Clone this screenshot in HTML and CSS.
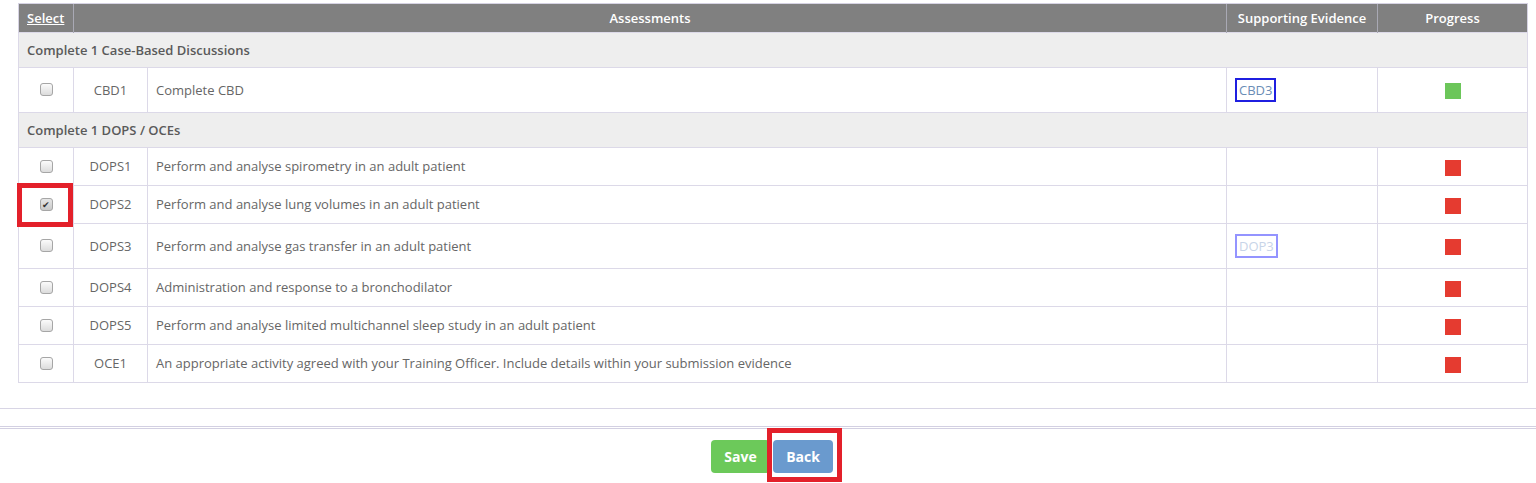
FILE: index.html
```html
<!DOCTYPE html>
<html lang="en">
<head>
<meta charset="utf-8">
<title>Assessments</title>
<link rel="stylesheet" href="styles.css">
</head>
<body>
<div class="page">
  <div class="table-wrap">
    <table class="grid">
      <colgroup>
        <col class="c-sel"><col class="c-num"><col class="c-title"><col class="c-ev"><col class="c-prog">
      </colgroup>
      <thead>
        <tr>
          <th class="th-sel"><a class="sel-link">Select</a></th>
          <th colspan="2">Assessments</th>
          <th>Supporting Evidence</th>
          <th>Progress</th>
        </tr>
      </thead>
      <tbody>
        <tr class="group"><td colspan="5">Complete 1 Case-Based Discussions</td></tr>
        <tr class="row tall">
          <td class="sel"><span class="cb"></span></td>
          <td class="num">CBD1</td>
          <td class="title">Complete CBD</td>
          <td class="ev"><a class="ev-link">CBD3</a></td>
          <td class="prog"><span class="sq green"></span></td>
        </tr>
        <tr class="group"><td colspan="5">Complete 1 DOPS / OCEs</td></tr>
        <tr class="row">
          <td class="sel"><span class="cb"></span></td>
          <td class="num">DOPS1</td>
          <td class="title">Perform and analyse spirometry in an adult patient</td>
          <td class="ev"></td>
          <td class="prog"><span class="sq red"></span></td>
        </tr>
        <tr class="row">
          <td class="sel marked"><span class="cb checked">&#10004;</span><span class="mark mark-cb"></span></td>
          <td class="num">DOPS2</td>
          <td class="title">Perform and analyse lung volumes in an adult patient</td>
          <td class="ev"></td>
          <td class="prog"><span class="sq red"></span></td>
        </tr>
        <tr class="row tall">
          <td class="sel"><span class="cb"></span></td>
          <td class="num">DOPS3</td>
          <td class="title">Perform and analyse gas transfer in an adult patient</td>
          <td class="ev"><a class="ev-link faded">DOP3</a></td>
          <td class="prog"><span class="sq red"></span></td>
        </tr>
        <tr class="row">
          <td class="sel"><span class="cb"></span></td>
          <td class="num">DOPS4</td>
          <td class="title">Administration and response to a bronchodilator</td>
          <td class="ev"></td>
          <td class="prog"><span class="sq red"></span></td>
        </tr>
        <tr class="row">
          <td class="sel"><span class="cb"></span></td>
          <td class="num">DOPS5</td>
          <td class="title">Perform and analyse limited multichannel sleep study in an adult patient</td>
          <td class="ev"></td>
          <td class="prog"><span class="sq red"></span></td>
        </tr>
        <tr class="row">
          <td class="sel"><span class="cb"></span></td>
          <td class="num">OCE1</td>
          <td class="title">An appropriate activity agreed with your Training Officer. Include details within your submission evidence</td>
          <td class="ev"></td>
          <td class="prog"><span class="sq red"></span></td>
        </tr>
      </tbody>
    </table>
  </div>
  <div class="rule"></div>
  <div class="actions">
    <button class="btn btn-save">Save</button>
    <span class="back-wrap"><button class="btn btn-back">Back</button><span class="mark mark-back"></span></span>
  </div>
</div>
</body>
</html>
```

FILE: styles.css
```css
* { box-sizing: border-box; }
html, body { margin: 0; padding: 0; background: #fff; }
body {
  font-family: "Open Sans", "Liberation Sans", Arial, sans-serif;
  font-size: 13px;
  color: #666;
}
.page { width: 1536px; height: 483px; overflow: hidden; }
.table-wrap { padding: 3px 9px 0 18px; }
.grid {
  width: 1509px;
  border-collapse: collapse;
  table-layout: fixed;
  border: 1px solid #d6d3e3;
}
.c-sel { width: 55px; }
.c-num { width: 74px; }
.c-title { width: 1079px; }
.c-ev { width: 151px; }
.c-prog { width: 150px; }

.grid th {
  background: #808080;
  color: #fff;
  font-weight: 600;
  font-size: 13px;
  height: 28.5px;
  padding: 0 8px;
  text-align: center;
  border-left: 1px solid #a9a9b4;
  border-top: 1px solid #d6d3e3;
}
.grid th:first-child { border-left: 1px solid #d6d3e3; }
.grid .th-sel { text-align: left; }
.sel-link { color: #fff; text-decoration: underline; }

.grid td {
  border: 1px solid #dcd9e8;
  padding: 0 8px;
  vertical-align: middle;
}
.group td {
  background: #eeeeee;
  font-weight: 600;
  color: #5a5a5a;
  height: 35px;
}
.row td { height: 38px; background: #fff; }
.row.tall td { height: 45px; }
.sel { text-align: center; position: relative; }
.num { text-align: center; }
.title { text-align: left; }
.ev { text-align: left; }
.prog { text-align: center; }

.cb {
  display: inline-block;
  width: 13px;
  height: 13px;
  border: 1px solid #a6a6a6;
  border-radius: 3px;
  background: linear-gradient(#fbfbfb, #dcdcdc);
  vertical-align: middle;
  margin-top: -3px;
  font-size: 9px;
  line-height: 11px;
  text-align: center;
  color: #333;
}
.cb.checked { background: linear-gradient(#e6e6e6, #c9c9c9); }

.ev-link {
  display: inline-block;
  border: 2px solid #1f1fe0;
  padding: 1px 2px;
  line-height: 18px;
  color: #6a8db6;
  text-decoration: none;
}
.ev-link.faded {
  border-color: #9494ff;
  color: #c7d4e8;
  padding: 1px 2px;
}

.sq {
  display: inline-block;
  width: 16px;
  height: 16px;
  vertical-align: middle;
  margin-top: 1px;
}
.sq.green { background: #6cc65a; }
.sq.red { background: #e53b30; }

.mark {
  position: absolute;
  border: 5px solid #e3202a;
  pointer-events: none;
  z-index: 5;
}
.mark-cb { left: -2px; top: -3px; width: 56px; height: 44px; }

.rule {
  margin-top: 25px;
  border-top: 1px solid #d8d5e5;
  height: 18px;
}
.actions {
  border-top: 3px double #d3d0e2;
  padding: 11px 0 0 8px;
  display: flex;
  justify-content: center;
  gap: 3px;
}
.btn {
  font-family: "Open Sans", "Liberation Sans", Arial, sans-serif;
  font-weight: 700;
  font-size: 14px;
  color: #fff;
  border: none;
  border-radius: 4px;
  height: 33px;
  padding: 0;
}
.btn-save { background: #6cc95a; width: 59px; }
.btn-back { background: #6a9ace; width: 60px; }
.back-wrap { position: relative; display: inline-block; height: 33px; }
.mark-back { left: -6px; top: -12px; width: 75px; height: 54px; }
```
